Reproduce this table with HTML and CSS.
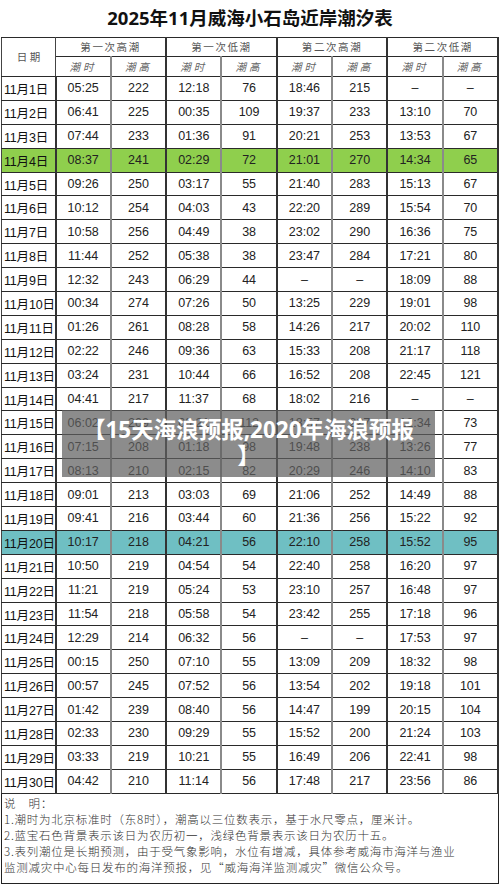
FILE: index.html
```html
<!DOCTYPE html>
<html lang="zh-CN">
<head>
<meta charset="utf-8">
<title>2025年11月威海小石岛近岸潮汐表</title>
<link rel="stylesheet" href="styles.css">
</head>
<body>
<div class="page">
  <h1 class="title">2025年11月威海小石岛近岸潮汐表</h1>
  <table class="tide">
    <colgroup>
      <col class="c-date">
      <col><col><col><col><col><col><col><col>
    </colgroup>
    <thead>
      <tr class="h1">
        <th rowspan="2" class="hdate">日&nbsp;期</th>
        <th colspan="2" class="grp">第一次高潮</th>
        <th colspan="2" class="grp">第一次低潮</th>
        <th colspan="2" class="grp">第二次高潮</th>
        <th colspan="2" class="grp">第二次低潮</th>
      </tr>
      <tr class="h2">
        <th class="sub">潮时</th><th class="sub g">潮高</th>
        <th class="sub">潮时</th><th class="sub g">潮高</th>
        <th class="sub">潮时</th><th class="sub g">潮高</th>
        <th class="sub">潮时</th><th class="sub g">潮高</th>
      </tr>
    </thead>
    <tbody>
      <tr><td class="d">11月1日</td><td>05:25</td><td class="g">222</td><td>12:18</td><td class="g">76</td><td>18:46</td><td class="g">215</td><td>–</td><td class="g">–</td></tr>
      <tr><td class="d">11月2日</td><td>06:41</td><td class="g">225</td><td>00:35</td><td class="g">109</td><td>19:37</td><td class="g">233</td><td>13:10</td><td class="g">70</td></tr>
      <tr><td class="d">11月3日</td><td>07:44</td><td class="g">233</td><td>01:36</td><td class="g">91</td><td>20:21</td><td class="g">253</td><td>13:53</td><td class="g">67</td></tr>
      <tr class="full"><td class="d">11月4日</td><td>08:37</td><td class="g">241</td><td>02:29</td><td class="g">72</td><td>21:01</td><td class="g">270</td><td>14:34</td><td class="g">65</td></tr>
      <tr><td class="d">11月5日</td><td>09:26</td><td class="g">250</td><td>03:17</td><td class="g">55</td><td>21:40</td><td class="g">283</td><td>15:13</td><td class="g">67</td></tr>
      <tr><td class="d">11月6日</td><td>10:12</td><td class="g">254</td><td>04:03</td><td class="g">43</td><td>22:20</td><td class="g">289</td><td>15:54</td><td class="g">70</td></tr>
      <tr><td class="d">11月7日</td><td>10:58</td><td class="g">256</td><td>04:49</td><td class="g">38</td><td>23:02</td><td class="g">290</td><td>16:36</td><td class="g">75</td></tr>
      <tr><td class="d">11月8日</td><td>11:44</td><td class="g">252</td><td>05:38</td><td class="g">38</td><td>23:47</td><td class="g">284</td><td>17:21</td><td class="g">80</td></tr>
      <tr><td class="d">11月9日</td><td>12:32</td><td class="g">243</td><td>06:29</td><td class="g">44</td><td>–</td><td class="g">–</td><td>18:09</td><td class="g">88</td></tr>
      <tr><td class="d">11月10日</td><td>00:34</td><td class="g">274</td><td>07:26</td><td class="g">50</td><td>13:25</td><td class="g">229</td><td>19:01</td><td class="g">98</td></tr>
      <tr><td class="d">11月11日</td><td>01:26</td><td class="g">261</td><td>08:28</td><td class="g">58</td><td>14:26</td><td class="g">217</td><td>20:02</td><td class="g">110</td></tr>
      <tr><td class="d">11月12日</td><td>02:22</td><td class="g">246</td><td>09:36</td><td class="g">63</td><td>15:33</td><td class="g">208</td><td>21:17</td><td class="g">118</td></tr>
      <tr><td class="d">11月13日</td><td>03:24</td><td class="g">231</td><td>10:44</td><td class="g">66</td><td>16:52</td><td class="g">208</td><td>22:45</td><td class="g">121</td></tr>
      <tr><td class="d">11月14日</td><td>04:41</td><td class="g">217</td><td>11:37</td><td class="g">68</td><td>18:02</td><td class="g">216</td><td>–</td><td class="g">–</td></tr>
      <tr><td class="d">11月15日</td><td>06:02</td><td class="g">209</td><td>00:21</td><td class="g">112</td><td>18:57</td><td class="g">227</td><td>12:34</td><td class="g">73</td></tr>
      <tr><td class="d">11月16日</td><td>07:15</td><td class="g">208</td><td>01:18</td><td class="g">98</td><td>19:48</td><td class="g">238</td><td>13:26</td><td class="g">77</td></tr>
      <tr><td class="d">11月17日</td><td>08:13</td><td class="g">210</td><td>02:15</td><td class="g">82</td><td>20:29</td><td class="g">246</td><td>14:10</td><td class="g">83</td></tr>
      <tr><td class="d">11月18日</td><td>09:01</td><td class="g">213</td><td>03:03</td><td class="g">69</td><td>21:06</td><td class="g">252</td><td>14:49</td><td class="g">88</td></tr>
      <tr><td class="d">11月19日</td><td>09:41</td><td class="g">216</td><td>03:44</td><td class="g">60</td><td>21:36</td><td class="g">256</td><td>15:22</td><td class="g">92</td></tr>
      <tr class="new"><td class="d">11月20日</td><td>10:17</td><td class="g">218</td><td>04:21</td><td class="g">56</td><td>22:10</td><td class="g">258</td><td>15:52</td><td class="g">95</td></tr>
      <tr><td class="d">11月21日</td><td>10:50</td><td class="g">219</td><td>04:54</td><td class="g">54</td><td>22:40</td><td class="g">258</td><td>16:20</td><td class="g">97</td></tr>
      <tr><td class="d">11月22日</td><td>11:21</td><td class="g">219</td><td>05:24</td><td class="g">53</td><td>23:10</td><td class="g">257</td><td>16:48</td><td class="g">97</td></tr>
      <tr><td class="d">11月23日</td><td>11:54</td><td class="g">218</td><td>05:58</td><td class="g">54</td><td>23:42</td><td class="g">255</td><td>17:18</td><td class="g">96</td></tr>
      <tr><td class="d">11月24日</td><td>12:29</td><td class="g">214</td><td>06:32</td><td class="g">56</td><td>–</td><td class="g">–</td><td>17:53</td><td class="g">97</td></tr>
      <tr><td class="d">11月25日</td><td>00:15</td><td class="g">250</td><td>07:10</td><td class="g">55</td><td>13:09</td><td class="g">209</td><td>18:32</td><td class="g">98</td></tr>
      <tr><td class="d">11月26日</td><td>00:57</td><td class="g">245</td><td>07:52</td><td class="g">56</td><td>13:54</td><td class="g">202</td><td>19:18</td><td class="g">101</td></tr>
      <tr><td class="d">11月27日</td><td>01:42</td><td class="g">239</td><td>08:40</td><td class="g">56</td><td>14:47</td><td class="g">199</td><td>20:15</td><td class="g">104</td></tr>
      <tr><td class="d">11月28日</td><td>02:33</td><td class="g">230</td><td>09:29</td><td class="g">55</td><td>15:52</td><td class="g">200</td><td>21:24</td><td class="g">103</td></tr>
      <tr><td class="d">11月29日</td><td>03:33</td><td class="g">219</td><td>10:21</td><td class="g">55</td><td>16:49</td><td class="g">206</td><td>22:41</td><td class="g">98</td></tr>
      <tr><td class="d">11月30日</td><td>04:42</td><td class="g">210</td><td>11:14</td><td class="g">56</td><td>17:48</td><td class="g">217</td><td>23:56</td><td class="g">86</td></tr>
    </tbody>
  </table>
  <div class="notes">
    <p>说&emsp;明：</p>
    <p>1.潮时为北京标准时（东8时），潮高以三位数表示，基于水尺零点，厘米计。</p>
    <p>2.蓝宝石色背景表示该日为农历初一，浅绿色背景表示该日为农历十五。</p>
    <p>3.表列潮位是长期预测，由于受气象影响，水位有增减，具体参考威海市海洋与渔业</p>
    <p>监测减灾中心每日发布的海洋预报，见“威海海洋监测减灾”微信公众号。</p>
  </div>
  <div class="overlay">【15天海浪预报,2020年海浪预报<br>】</div>
</div>
</body>
</html>
```
FILE: styles.css
```css
html, body {
  margin: 0;
  padding: 0;
  background: #ffffff;
}

.page {
  position: relative;
  width: 498px;
  padding: 0 1px;
  font-family: "Liberation Sans", "Noto Sans CJK SC", sans-serif;
  color: #222;
}

.title {
  margin: 0;
  height: 37px;
  line-height: 35px;
  text-align: center;
  font-family: "Noto Sans", "Noto Sans CJK SC", sans-serif;
  font-size: 18.5px;
  font-weight: 700;
  color: #111;
  letter-spacing: 0;
}

.tide {
  width: 498px;
  border-collapse: collapse;
  table-layout: fixed;
  border: 1px solid #222;
}

.c-date {
  width: 54px;
}

.tide th,
.tide td {
  padding: 0;
  text-align: center;
  border-top: 1px solid #2a2a2a;
  border-bottom: 1px solid #2a2a2a;
  border-left: 1px solid #444;
  border-right: 1px solid #444;
  overflow: hidden;
  white-space: nowrap;
}

.tide th {
  font-family: "Noto Sans CJK SC", sans-serif;
  font-weight: 400;
  color: #555;
  font-size: 10.5px;
  letter-spacing: 1.6px;
}

.h1 th {
  height: 18px;
  line-height: 18px;
}

.h2 th {
  height: 19px;
  line-height: 19px;
}

.tide th.hdate {
  letter-spacing: 0;
  font-size: 10.5px;
  color: #555;
}

.tide th.sub {
  font-style: italic;
  letter-spacing: 3px;
  color: #666;
}

.tide td {
  height: 22.9px;
  font-size: 12.5px;
  color: #222;
}

.tide td.g,
.tide th.g {
  border-right: 2px solid #333;
}

.tide th.grp {
  border-right: 2px solid #333;
}

.tide td.d {
  text-align: left;
  padding-left: 2px;
  letter-spacing: -0.2px;
  color: #111;
  border-right: 2px solid #333;
}

.tide td:nth-child(2n) {
  border-right: 2px solid #8a8a8a;
}

.tide th.sub:not(.g) {
  border-right: 2px solid #8a8a8a;
}

.tide tr.full td {
  background: #8fcf4d;
}

.tide tr.new td {
  background: #6fbfc3;
}

.notes {
  border-left: 1px solid #222;
  border-right: 1px solid #222;
  border-bottom: 1px solid #222;
  padding: 1px 2px 8px 2px;
  font-family: "Noto Sans CJK SC", sans-serif;
  font-size: 11.5px;
  letter-spacing: 0.75px;
  color: #333;
  font-weight: 300;
}

.notes p {
  margin: 0;
  line-height: 16px;
  white-space: nowrap;
}

.overlay {
  position: absolute;
  left: 62px;
  top: 410px;
  width: 373px;
  height: 67px;
  box-sizing: border-box;
  padding-top: 7px;
  background: rgba(95, 95, 95, 0.72);
  color: #ffffff;
  text-align: center;
  font-family: "Noto Sans", "Noto Sans CJK SC", sans-serif;
  font-weight: 700;
  font-size: 22.5px;
  line-height: 26px;
}
```
